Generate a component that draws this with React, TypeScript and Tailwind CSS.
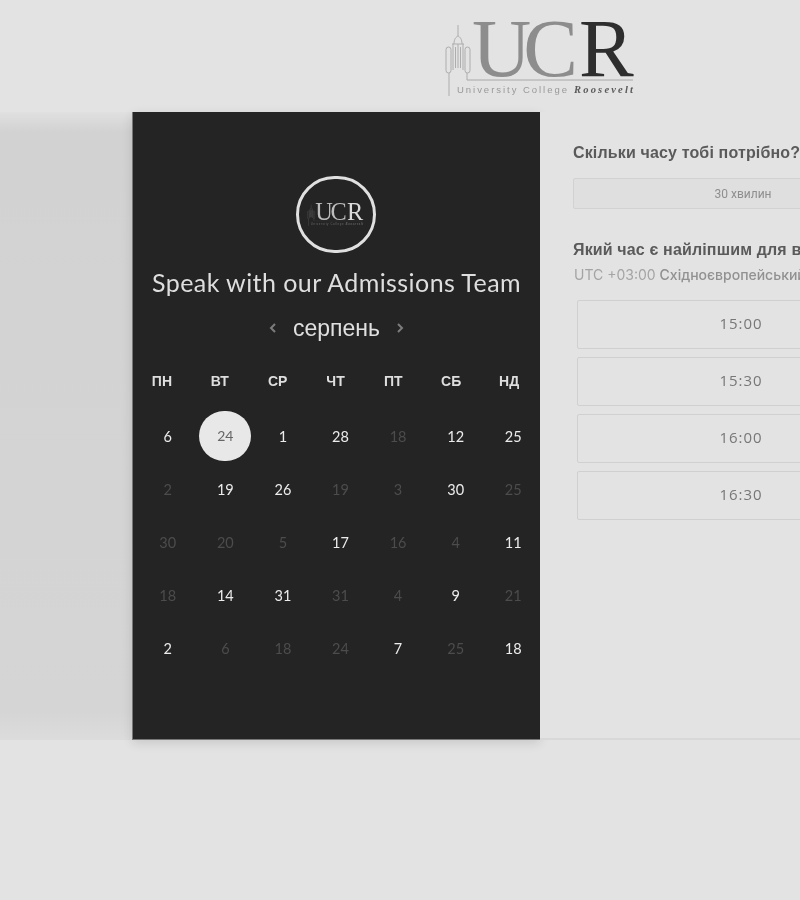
const dayRows: [string, boolean][][] = [
  [["6", true], ["24", true], ["1", true], ["28", true], ["18", false], ["12", true], ["25", true]],
  [["2", false], ["19", true], ["26", true], ["19", false], ["3", false], ["30", true], ["25", false]],
  [["30", false], ["20", false], ["5", false], ["17", true], ["16", false], ["4", false], ["11", true]],
  [["18", false], ["14", true], ["31", true], ["31", false], ["4", false], ["9", true], ["21", false]],
  [["2", true], ["6", false], ["18", false], ["24", false], ["7", true], ["25", false], ["18", true]],
];
const weekdays = ["ПН", "ВТ", "СР", "ЧТ", "ПТ", "СБ", "НД"];
const times = ["15:00", "15:30", "16:00", "16:30"];

type MarkColors = { tower: string; line: string; uc: string; r: string; sub: string; sub2: string };

function LogoMark({ width, height, c }: { width: number; height: number; c: MarkColors }) {
  return (
    <svg width={width} height={height} viewBox="0 0 192 100" className="block">
      <g fill="none" stroke={c.tower} strokeWidth="1">
        <path d="M14 25V36M10 44C10 39 12 37 14 36C16 37 18 39 18 44M8 44H20M9 44V70M19 44V70M14 44V68M11.500 47V68M16.500 47V68" />
        <rect x="2" y="47" width="5" height="26" rx="2.500" />
        <rect x="21" y="47" width="5" height="26" rx="2.500" />
        <path d="M5 73V96M23 73V80" />
      </g>
      <path d="M23 80H189" stroke={c.line} strokeWidth="1" fill="none" />
      <text x="28" y="76" fontFamily="Liberation Serif" fontSize="82" fill={c.uc} letterSpacing="-8">UC</text>
      <text x="135" y="76" fontFamily="Liberation Serif" fontSize="82" fill={c.r}>R</text>
      <text x="13" y="93" fontFamily="Liberation Sans" fontSize="9.500" fill={c.sub} textLength="110">University College</text>
      <text x="130" y="93" fontFamily="Liberation Serif" fontSize="10.500" fontStyle="italic" fontWeight="700" fill={c.sub2} textLength="59">Roosevelt</text>
    </svg>
  );
}

function Chevron({ left }: { left?: boolean }) {
  return (
    <svg width="8" height="12" viewBox="0 0 8 12" className="block">
      <path d={left ? "M6 2L2 6L6 10" : "M2 2L6 6L2 10"} fill="none" stroke="#7c7c7c" strokeWidth="2" />
    </svg>
  );
}

export default function App() {
  return (
    <div className="h-[900px] w-[800px] overflow-hidden bg-[#e3e3e3] font-['Liberation_Sans',sans-serif] blur-[0.4px]">
      <header className="flex h-[112px] items-start pl-[444px]">
        <LogoMark width={192} height={100} c={{ tower: "#adadad", line: "#a8a8a8", uc: "#8d8d8d", r: "#2e2e2e", sub: "#999999", sub2: "#5a5a5a" }} />
      </header>
      <main className="flex h-[628px]">
        <div className="w-[132px] shrink-0 bg-[linear-gradient(to_bottom,#e0e0e0_0px,#d2d2d2_20px,#d5d5d5_600px,#dcdcdc_628px)]" />
        <section className="flex w-[408px] shrink-0 flex-col items-center border-b border-l border-[#777777] bg-[#242424] pt-[64px] shadow-[0_3px_10px_rgba(0,0,0,0.12)]">
          <div className="mr-[2px] flex h-[77px] w-[80px] items-center justify-center rounded-full border-[3px] border-[#e0e0e0] pb-[5px]">
            <LogoMark width={57} height={30} c={{ tower: "#666666", line: "#444444", uc: "#bdbdbd", r: "#dcdcdc", sub: "#6a6a6a", sub2: "#6a6a6a" }} />
          </div>
          <h1 className="mt-[12px] whitespace-nowrap font-['Lato',sans-serif] text-[25px] font-normal leading-[34px] tracking-[0.43px] text-[#dedede]">
            Speak with our Admissions Team
          </h1>
          <div className="mt-[14px] flex h-[30px] items-center gap-[16px]">
            <Chevron left />
            <span className="text-[23px] leading-[30px] text-[#e0e0e0]">серпень</span>
            <Chevron />
          </div>
          <div className="mt-[28px] grid w-[405px] grid-cols-7 self-start">
            {weekdays.map((d) => (
              <div key={d} className="text-center text-[14px] font-bold leading-[20px] text-[#dedede]">{d}</div>
            ))}
          </div>
          <div className="ml-[6px] mt-[19px] grid w-[403px] grid-cols-7 grid-rows-[repeat(5,53px)] self-start">
            {dayRows.flat().map(([n, on], i) =>
              i === 1 ? (
                <div key={i} className="flex items-center justify-center pb-[2px]">
                  <span className="flex h-[50px] w-[52px] items-center justify-center rounded-full bg-[#e8e8e8] pb-[1px] font-['Lato',sans-serif] text-[14px] text-[#666666]">{n}</span>
                </div>
              ) : (
                <div key={i} className={`flex items-center justify-center font-['Lato',sans-serif] text-[14.500px] ${on ? "text-[#ececec]" : "text-[#4c4c4c]"}`}>
                  {n}
                </div>
              ),
            )}
          </div>
        </section>
        <section className="min-w-0 flex-1 overflow-hidden border-b-2 border-[#d8d8d8] bg-[#e3e3e3] pt-[31px]">
          <div className="w-[400px] pl-[33px]">
            <h2 className="whitespace-nowrap text-[16px] font-bold leading-[20px] tracking-[0.15px] text-[#5a5a5a]">Скільки часу тобі потрібно?</h2>
            <div className="mt-[15px] flex h-[31px] w-[340px] items-center justify-center rounded-[2px] border border-[#d2d2d2] bg-[#dfdfdf] font-['Roboto',sans-serif] text-[12px] text-[#8e8e8e]">
              30 хвилин
            </div>
            <h2 className="mt-[31px] whitespace-nowrap text-[16px] font-bold leading-[20px] tracking-[0.15px] text-[#5a5a5a]">Який час є найліпшим для вас?</h2>
            <p className="mt-[5px] whitespace-nowrap pl-[1px] font-['Inter',sans-serif] text-[14px] leading-[20px] text-[#a4a4a4]">
              UTC +03:00 <span className="font-medium text-[#919191]">Східноєвропейський час</span>
            </p>
            <div className="mt-[15px] flex w-[329px] flex-col gap-[8px] pl-[4px]">
              {times.map((t) => (
                <div key={t} className="flex h-[49px] w-[328px] shrink-0 items-center justify-center rounded-[2px] border border-[#d0d0d0] pb-[2px] font-['Open_Sans',sans-serif] text-[15px] tracking-[1px] text-[#777777]">
                  {t}
                </div>
              ))}
            </div>
          </div>
        </section>
      </main>
    </div>
  );
}
